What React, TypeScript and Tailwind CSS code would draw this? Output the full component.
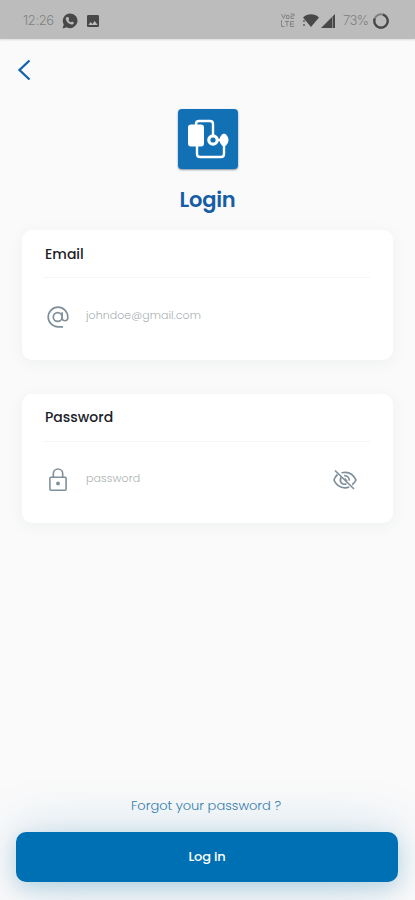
import type {ReactNode} from 'react';
import {MdImage} from 'react-icons/md';

function StatusBar() {
    return (
        <header className="flex h-[39px] shrink-0 items-center justify-between bg-[#bcbcbc] pt-0.5 pr-[26px] pl-[23px] font-['Inter',sans-serif] text-[#7f7f7f] shadow-[0_1px_2px_rgba(0,0,0,0.12)]">
            <div className="flex items-center">
                <span className="w-[39px] text-[13px] font-light tracking-[-0.35px]">12:26</span>
                <svg width="16" height="16" viewBox="0 0 16 16" fill="#484848" aria-hidden="true">
                    <path d="M8.200 0.500a7.300 7.300 0 1 1-3.500 13.700L0.500 15.500l1.300-4A7.300 7.300 0 0 1 8.200.5z" />
                    <path
                        d="M5.300 3.900l1.200.3.700 1.900-.8.900c.6 1.200 1.400 1.900 2.600 2.500l.9-1 1.900.9c.1 1.300-.8 2.100-2 2.100-3-.3-6-3.200-6-6 .1-.8.700-1.500 1.500-1.600z"
                        fill="#bcbcbc"
                    />
                </svg>
                <MdImage className="ml-[7px] h-4 w-4 text-[#484848]" aria-hidden="true" />
            </div>
            <div className="flex items-center">
                {/* VoLTE */}
                <svg width="14" height="15" viewBox="0 0 14 15" fill="none" stroke="currentColor" strokeWidth="0.9" aria-hidden="true">
                    <path d="M0.5 1l2 4.5 2-4.5M5.5 2.5h2.5v3H5.500zM9.500 1h3.500v2H10v2.500h3M0.500 7v6.500h3M4 8.500h4M6 8.500v5M13 8.500H9.500v5H13M9.500 11H13" />
                </svg>
                <svg className="ml-2" width="16" height="13" viewBox="0 0 16 13" fill="#484848" aria-hidden="true">
                    <path d="M0 3.500C4.500-.8 11.500-.8 16 3.500L8 13z" />
                    <path d="M0 6h2v2H0zM0 10h2v2H0z" fill="#777" />
                </svg>
                <svg className="ml-[2px]" width="14" height="14" viewBox="0 0 14 14" fill="#484848" aria-hidden="true">
                    <path d="M14 0v14H0z" />
                    <path d="M11.500 2.500V14" stroke="#858585" strokeWidth="1" />
                </svg>
                <span className="ml-2 w-[30px] text-[13px] font-light tracking-[-0.6px]">73%</span>
                <svg width="16" height="16" viewBox="0 0 16 16" fill="none" aria-hidden="true">
                    <circle cx="8" cy="8" r="6.700" stroke="#808080" strokeWidth="2" />
                    <path d="M10 1.600A6.700 6.700 0 1 1 1.800 5.500" stroke="#484848" strokeWidth="2.200" />
                </svg>
            </div>
        </header>
    );
}

function Logo() {
    return (
        <div className="h-[60px] w-[60px] overflow-hidden rounded-[4px] bg-[#1270b5] shadow-[0_1px_2px_rgba(0,40,80,0.5)]">
            <svg width="60" height="60" viewBox="0 0 60 60" fill="none" stroke="#fff" strokeWidth="2.4" strokeLinejoin="round" aria-hidden="true">
                <path d="M18 17v-2q0-3 3-3h11q3 0 3 3v12" />
                <path d="M19 37v8q0 3 3 3h21q3 0 3-3V36" />
                <rect x="10" y="15.500" width="16" height="22" rx="3" fill="#fff" stroke="none" />
                <circle cx="35" cy="31" r="4.200" strokeWidth="3.200" />
                <path d="M39 31h4" />
                <path d="M46 24.500c3 1 4.500 4 4.500 6.500s-1.500 4.500-3 6h-3c-1.500-1.500-3-3.500-3-6s1.500-5.500 4.500-6.500z" fill="#fff" stroke="none" />
            </svg>
        </div>
    );
}

function AtIcon() {
    return (
        <svg width="24" height="24" viewBox="0 0 24 24" fill="none" stroke="currentColor" strokeWidth="1.700" aria-hidden="true">
            <path d="M17 21.800h-5A9.800 9.800 0 1 1 21.800 12v1.400a2.900 2.900 0 0 1-5.700 0V7.200" />
            <circle cx="11.700" cy="12" r="4.400" />
        </svg>
    );
}

function LockIcon() {
    return (
        <svg width="24" height="26" viewBox="0 0 24 26" fill="none" stroke="currentColor" strokeWidth="1.600" aria-hidden="true">
            <rect x="3.900" y="10.300" width="16.200" height="13" rx="1" />
            <path d="M7.300 10V6.700a4.700 4.700 0 0 1 9.400 0V10" />
            <circle cx="12" cy="16.500" r="1.900" fill="currentColor" stroke="none" />
        </svg>
    );
}

function EyeOffIcon() {
    return (
        <svg width="26" height="24" viewBox="0 0 26 24" fill="none" stroke="currentColor" strokeWidth="1.700" aria-hidden="true">
            <path d="M3 2.500L22 21" />
            <path d="M9.500 4.800c7-1.800 12 2 14.500 7.200-.9 1.900-2.200 3.500-3.900 4.700M5.500 6.500C3.900 7.900 2.700 9.800 2 12c2.700 6.500 9.200 9.400 15.200 7" />
            <path d="M12.200 7.700c3.200-.2 5.200 2 5.100 4.900M9.300 9.300c-2.700 4 .8 8.200 5.200 6.500" />
            <path d="M12.500 10.500l2.500 2.500" />
        </svg>
    );
}

interface FieldProps {
    label: string;
    type: string;
    placeholder: string;
    icon: ReactNode;
    placeholderStyle: string;
    action?: ReactNode;
}

function Field({label, type, placeholder, icon, placeholderStyle, action}: FieldProps) {
    return (
        <label className="block h-[129.500px] rounded-[10px] bg-white px-[23px] shadow-[0_3px_16px_rgba(40,70,70,0.055)]">
            <span className="flex h-[47px] items-center pt-px text-[14px] font-medium text-[#202027]">{label}</span>
            <span className="-ml-0.5 block h-px bg-[#f6f6f6]" />
            <span className="flex h-[77px] items-center text-[#80909b]">
                <span className="flex w-[41px] shrink-0 pl-px">{icon}</span>
                <input
                    type={type}
                    placeholder={placeholder}
                    className={`mb-[3px] w-0 min-w-0 flex-1 text-[11px] font-light outline-none placeholder:text-[#a9b0b2] ${placeholderStyle}`}
                />
                {action}
            </span>
        </label>
    );
}

export default function App() {
    return (
        <div className="flex h-[900px] w-full flex-col overflow-hidden bg-[#fafafa] font-['Poppins','Inter',sans-serif]">
            <StatusBar />
            <main className="flex flex-1 flex-col">
                <button type="button" aria-label="Back" className="mt-5 ml-[17px] h-[22px] w-[14px] text-[#1262ad]">
                    <svg width="14" height="22" viewBox="0 0 14 22" fill="none" stroke="currentColor" strokeWidth="2.300" aria-hidden="true">
                        <path d="M12.500 1.500L2.500 11l10 9.500" />
                    </svg>
                </button>
                <div className="mt-[27.500px] flex flex-col items-center">
                    <Logo />
                    <h1 className="mt-[16.500px] text-[21px] leading-[30px] font-semibold tracking-[-0.2px] text-[#155da5]">Login</h1>
                </div>
                <form className="mt-[15px] flex flex-col gap-[34px] px-[22px]">
                    <Field
                        label="Email"
                        type="email"
                        placeholder="johndoe@gmail.com"
                        placeholderStyle="tracking-[0.05px]"
                        icon={<AtIcon />}
                    />
                    <Field
                        label="Password"
                        type="password"
                        placeholder="password"
                        placeholderStyle="tracking-[0.1px]"
                        icon={<LockIcon />}
                        action={
                            <button type="button" aria-label="Show password" className="mr-[12px]">
                                <EyeOffIcon />
                            </button>
                        }
                    />
                </form>
                <div className="mt-auto flex flex-col items-center pr-[17px] pb-[18px] pl-4">
                    <a href="#" className="relative z-10 mr-[2px] mb-[16px] text-[13px] leading-5 font-light text-[#347cad]">
                        Forgot your password ?
                    </a>
                    <button type="button" className="h-[50px] w-full rounded-[10px] bg-[#0070b5] text-[13px] font-medium tracking-[-0.2px] text-white shadow-[0_6px_20px_rgba(0,112,150,0.2),0_0_56px_rgba(0,112,181,0.2)]">
                        Log in
                    </button>
                </div>
            </main>
        </div>
    );
}
